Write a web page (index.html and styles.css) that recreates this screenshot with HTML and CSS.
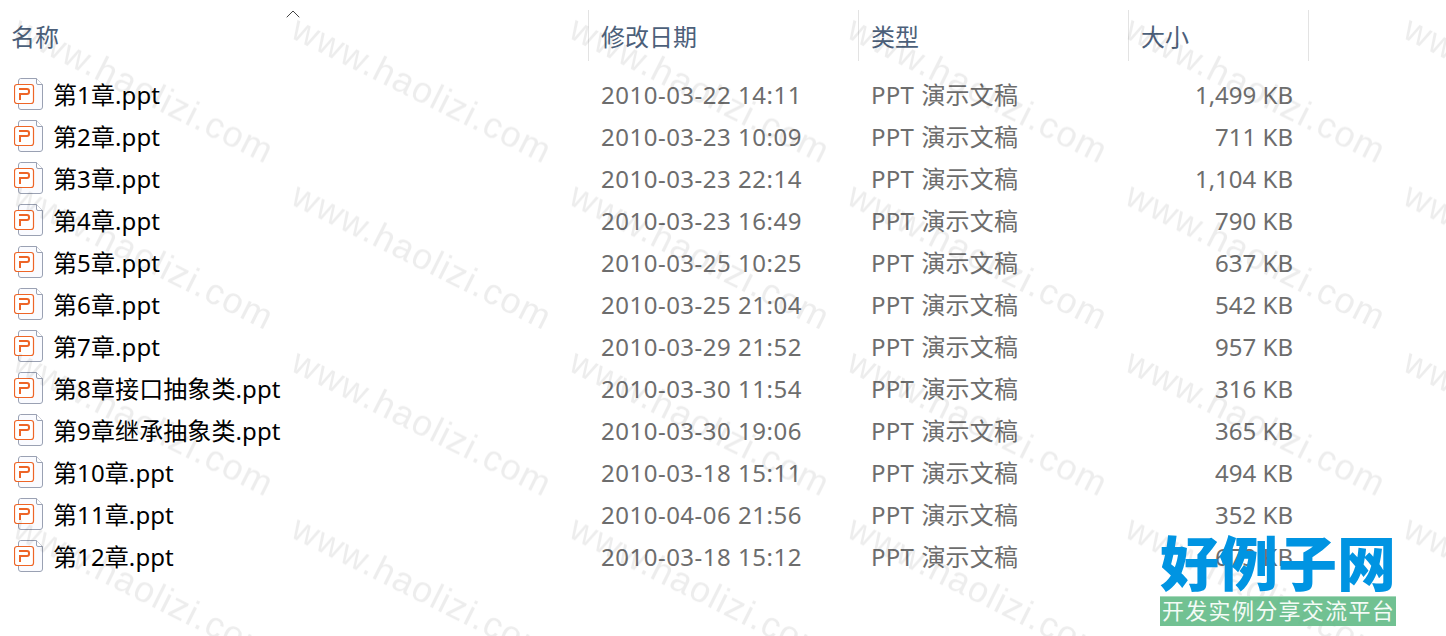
FILE: index.html
```html
<!DOCTYPE html>
<html lang="zh-CN">
  <head>
    <meta charset="UTF-8" />
    <meta name="viewport" content="width=device-width, initial-scale=1.0" />
    <title>文件列表</title>
    <link rel="stylesheet" href="styles.css">
  </head>
  <body>
    <svg class="sprite" width="0" height="0">
      <symbol id="ppt" viewBox="0 0 29 32">
        <path d="M6.500 .5h16l6 6v22.500a2.500 2.500 0 0 1-2.500 2.500H7A2.500 2.500 0 0 1 4.500 29V3A2.500 2.500 0 0 1 6.500 .5z" fill="#fafbff" stroke="#9aa1b3"/>
        <path d="M22.500 .5v4.500q0 1.500 1.500 1.500h4.500" fill="#fff" stroke="#9aa1b3"/>
        <rect x=".5" y="6.500" width="19" height="19" rx="2.500" fill="#fff" stroke="#ee6527" stroke-width="1.200"/>
        <path d="M5 11h8q2 0 2 2v1q0 2-2 2H6v6" fill="none" stroke="#ee6527" stroke-width="2"/>
      </symbol>
    </svg>

    <div class="file-list">
      <div class="row header">
        <div class="col">名称
          <svg class="sort" width="14" height="8" viewBox="0 0 14 8"><path d="M.7 7.300L7 1l6.300 6.300" fill="none" stroke="#444"/></svg>
        </div>
        <div class="col">修改日期</div>
        <div class="col">类型</div>
        <div class="col">大小</div>
      </div>
      <div id="files"></div>
    </div>

    <svg class="watermark" width="1446" height="636">
      <defs>
        <pattern id="mark" width="278" height="166.500" patternUnits="userSpaceOnUse">
          <text transform="translate(11 37) rotate(26.500)" textLength="284">www.haolizi.com</text>
        </pattern>
      </defs>
      <rect width="1446" height="636" fill="url(#mark)"/>
    </svg>

    <div class="logo">
      <div class="logo-name">好例子网</div>
      <div class="logo-slogan">开发实例分享交流平台</div>
    </div>

    <script>
      const files = [
        ["第1章.ppt", "2010-03-22 14:11", "1,499 KB"],
        ["第2章.ppt", "2010-03-23 10:09", "711 KB"],
        ["第3章.ppt", "2010-03-23 22:14", "1,104 KB"],
        ["第4章.ppt", "2010-03-23 16:49", "790 KB"],
        ["第5章.ppt", "2010-03-25 10:25", "637 KB"],
        ["第6章.ppt", "2010-03-25 21:04", "542 KB"],
        ["第7章.ppt", "2010-03-29 21:52", "957 KB"],
        ["第8章接口抽象类.ppt", "2010-03-30 11:54", "316 KB"],
        ["第9章继承抽象类.ppt", "2010-03-30 19:06", "365 KB"],
        ["第10章.ppt", "2010-03-18 15:11", "494 KB"],
        ["第11章.ppt", "2010-04-06 21:56", "352 KB"],
        ["第12章.ppt", "2010-03-18 15:12", "673 KB"],
      ];

      document.getElementById("files").innerHTML = files
        .map(
          ([name, date, size]) => `
        <div class="row file">
          <div class="name"><svg class="icon"><use href="#ppt"/></svg><span>${name}</span></div>
          <div class="date">${date}</div>
          <div class="type">PPT 演示文稿</div>
          <div class="size">${size}</div>
        </div>`
        )
        .join("");
    </script>
  </body>
</html>
```
FILE: styles.css
```css
* {
  box-sizing: border-box;
  margin: 0;
  padding: 0;
}

body {
  position: relative;
  width: 1446px;
  height: 636px;
  overflow: hidden;
  background: #fff;
  font-family: "Noto Sans", "Noto Sans CJK SC", sans-serif;
  font-size: 24px;
  color: #6d6d6d;
}

.sprite {
  position: absolute;
}

.file-list {
  padding-top: 10px;
}

.row {
  display: grid;
  grid-template-columns: 589px 270px 270px 180px;
  white-space: nowrap;
}

.header {
  height: 64px;
  color: #4c607a;
}

.col {
  position: relative;
  height: 51px;
  padding-left: 12px;
  line-height: 53px;
  border-right: 1px solid #e3e3e3;
}

.col:first-child {
  padding-left: 11px;
}

.sort {
  position: absolute;
  left: 286px;
  top: 0;
}

.file {
  height: 42px;
  line-height: 42px;
}

.name {
  display: flex;
  align-items: center;
  gap: 10px;
  padding-left: 14px;
  letter-spacing: 0.1px;
  color: #000;
}

.icon {
  width: 29px;
  height: 32px;
  margin-top: -2px;
}

.date,
.type {
  padding-left: 12px;
}

.date {
  letter-spacing: 0.5px;
}

.type {
  letter-spacing: 0.2px;
  word-spacing: 1px;
}

.size {
  padding-right: 16px;
  text-align: right;
}

.watermark {
  position: absolute;
  left: 0;
  top: 0;
  font-family: "Liberation Sans", Arial, sans-serif;
  font-size: 36px;
  fill: rgba(0, 0, 0, 0.07);
}

.logo {
  position: absolute;
  left: 1160px;
  top: 530px;
  width: 236px;
}

.logo-name {
  height: 66px;
  line-height: 62px;
  font-family: "Noto Sans CJK SC", sans-serif;
  font-size: 59px;
  font-weight: 900;
  color: #0094e2;
  white-space: nowrap;
}

.logo-slogan {
  height: 30px;
  line-height: 26px;
  border-top: 1px solid #a9d9bc;
  background: rgba(92, 184, 130, 0.87);
  font-size: 22px;
  letter-spacing: 1.300px;
  padding-left: 2px;
  color: #f4fbf6;
  white-space: nowrap;
}
```
